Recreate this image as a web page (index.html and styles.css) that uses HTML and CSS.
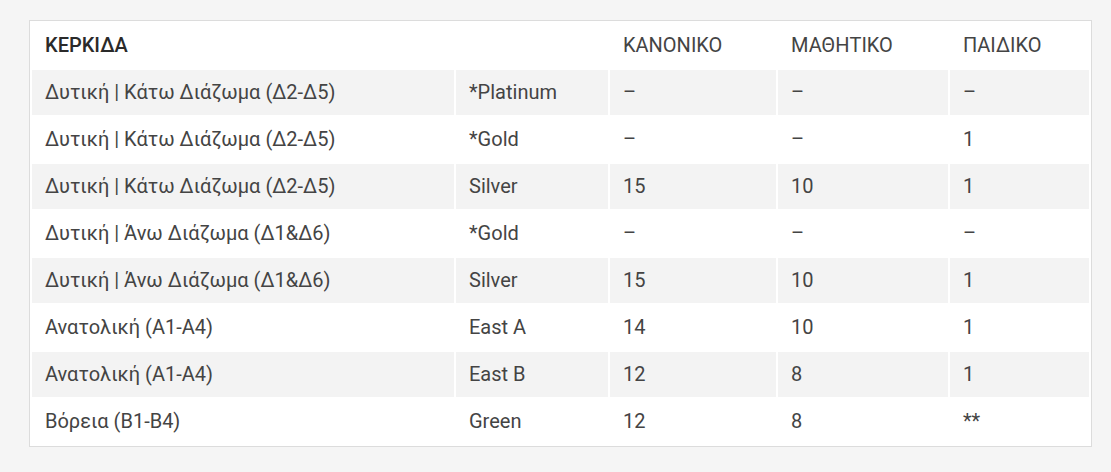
FILE: index.html
```html
<!DOCTYPE html>
<html lang="el">
<head>
<meta charset="utf-8">
<title>Κερκίδες</title>
<link rel="stylesheet" href="styles.css">
</head>
<body>
<div class="box">
<table class="prices">
<colgroup>
<col class="c1"><col class="c2"><col class="c3"><col class="c4"><col class="c5">
</colgroup>
<thead>
<tr><th class="main">ΚΕΡΚΙΔΑ</th><th></th><th>ΚΑΝΟΝΙΚΟ</th><th>ΜΑΘΗΤΙΚΟ</th><th>ΠΑΙΔΙΚΟ</th></tr>
</thead>
<tbody>
<tr><td>Δυτική | Κάτω Διάζωμα (Δ2-Δ5)</td><td>*Platinum</td><td>–</td><td>–</td><td>–</td></tr>
<tr><td>Δυτική | Κάτω Διάζωμα (Δ2-Δ5)</td><td>*Gold</td><td>–</td><td>–</td><td>1</td></tr>
<tr><td>Δυτική | Κάτω Διάζωμα (Δ2-Δ5)</td><td>Silver</td><td>15</td><td>10</td><td>1</td></tr>
<tr><td>Δυτική | Άνω Διάζωμα (Δ1&amp;Δ6)</td><td>*Gold</td><td>–</td><td>–</td><td>–</td></tr>
<tr><td>Δυτική | Άνω Διάζωμα (Δ1&amp;Δ6)</td><td>Silver</td><td>15</td><td>10</td><td>1</td></tr>
<tr><td>Ανατολική (Α1-Α4)</td><td>East A</td><td>14</td><td>10</td><td>1</td></tr>
<tr><td>Ανατολική (Α1-Α4)</td><td>East B</td><td>12</td><td>8</td><td>1</td></tr>
<tr><td>Βόρεια (Β1-Β4)</td><td>Green</td><td>12</td><td>8</td><td>**</td></tr>
</tbody>
</table>
</div>
</body>
</html>
```
FILE: styles.css
```css
html, body {
  margin: 0;
  background: #f5f5f5;
}
body {
  padding: 20px 19px 0 29px;
  font-family: Roboto, "Liberation Sans", sans-serif;
  font-size: 20px;
  font-weight: 400;
  color: #444;
}
.box {
  background: #fff;
  border: 1px solid #dcdcdc;
}
.prices {
  width: 100%;
  table-layout: fixed;
  border-collapse: separate;
  border-spacing: 2px;
}
.c1 { width: 422px; }
.c2 { width: 152px; }
.c3 { width: 166px; }
.c4 { width: 170px; }
.c5 { width: 139px; }
.prices th,
.prices td {
  padding: 11px 13px;
  line-height: 23px;
  text-align: left;
  vertical-align: middle;
  white-space: nowrap;
}
.prices th {
  font-weight: 400;
  color: #444;
}
.prices th.main {
  font-weight: 500;
  color: #2a2a2a;
}
.prices tbody tr:nth-child(odd) td {
  background: #f3f3f3;
}
```
